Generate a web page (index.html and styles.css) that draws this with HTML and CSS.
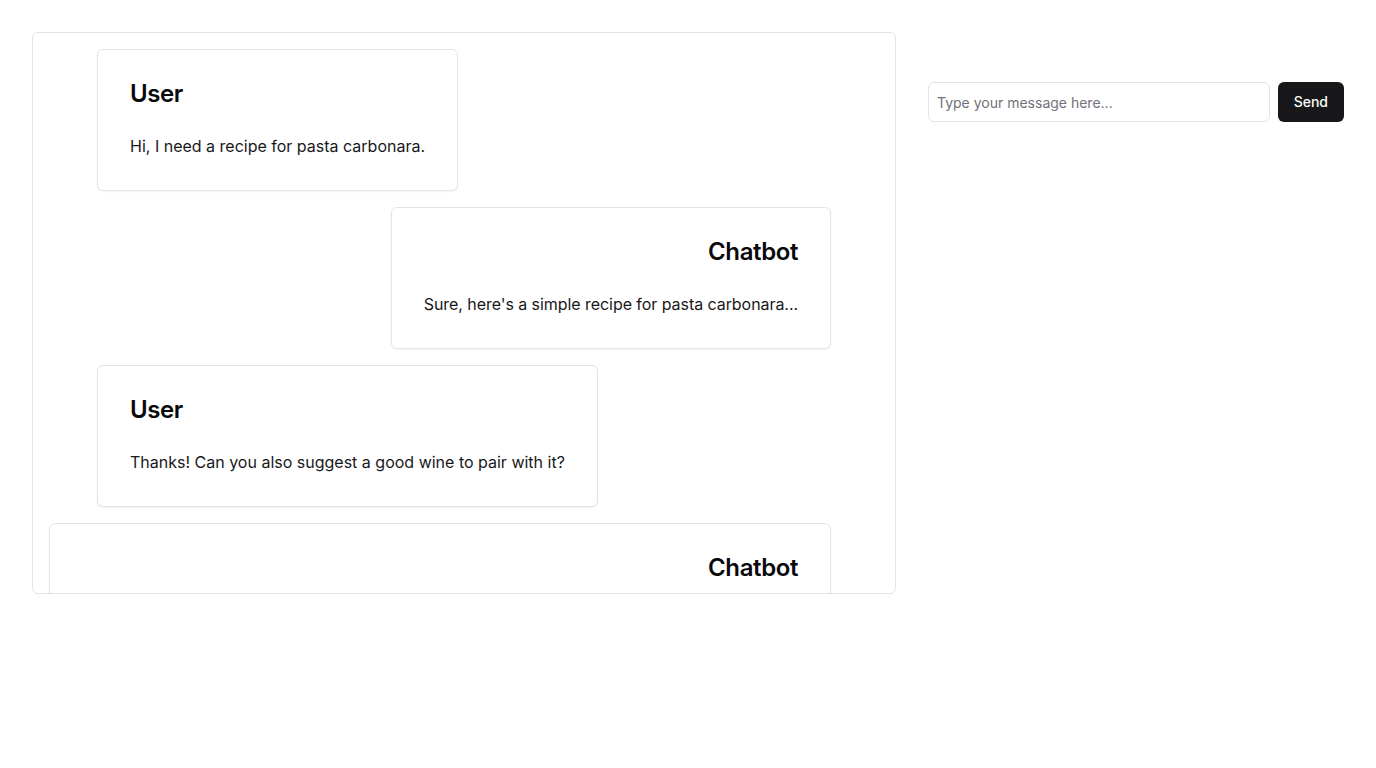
FILE: index.html
```html
<!DOCTYPE html>
<html lang="en">
<head>
<meta charset="utf-8">
<title>Chat</title>
<link rel="stylesheet" href="styles.css">
</head>
<body>
<div class="page">
  <section class="chat">
    <div class="card user">
      <h3 class="title">User</h3>
      <p class="text">Hi, I need a recipe for pasta carbonara.</p>
    </div>
    <div class="card bot">
      <h3 class="title">Chatbot</h3>
      <p class="text tight">Sure, here's a simple recipe for pasta carbonara...</p>
    </div>
    <div class="card user">
      <h3 class="title">User</h3>
      <p class="text">Thanks! Can you also suggest a good wine to pair with it?</p>
    </div>
    <div class="card bot wide">
      <h3 class="title">Chatbot</h3>
      <p class="text">For pasta carbonara, a crisp white wine such as a Pinot Grigio or a Frascati pairs beautifully.</p>
    </div>
  </section>
  <aside class="side">
    <form class="composer">
      <input class="input" type="text" placeholder="Type your message here...">
      <button class="send" type="button">Send</button>
    </form>
  </aside>
</div>
</body>
</html>
```

FILE: styles.css
```css
* { box-sizing: border-box; }
html, body { margin: 0; background: #ffffff; }
body {
  font-family: Inter, "Noto Sans", sans-serif;
  color: #09090b;
}
.page {
  display: grid;
  grid-template-columns: repeat(3, 1fr);
  gap: 32px;
  padding: 32px;
}
.chat {
  grid-column: span 2;
  height: 562px;
  border: 1px solid #e4e4e7;
  border-radius: 6px;
  padding: 16px;
  overflow: hidden;
  display: flex;
  flex-direction: column;
  gap: 16px;
}
.card {
  border: 1px solid #e4e4e7;
  border-radius: 6px;
  background: #fff;
  box-shadow: 0 1px 2px rgba(0,0,0,0.05);
  padding: 32px;
  flex-shrink: 0;
}
.user {
  align-self: flex-start;
  margin-left: 48px;
}
.bot {
  align-self: flex-end;
  margin-right: 48px;
  text-align: right;
}
.bot.wide {
  align-self: stretch;
  margin-left: 0;
}
.title {
  margin: 0 0 28px;
  font-size: 24px;
  line-height: 24px;
  font-weight: 600;
  letter-spacing: -0.4px;
}
.text {
  margin: 0;
  font-size: 16px;
  line-height: 24px;
  color: #18181b;
}
.text.tight {
  letter-spacing: -0.06px;
}
.side {
  padding-top: 50px;
}
.composer {
  display: flex;
  gap: 8px;
  margin: 0;
}
.input {
  flex: 1;
  min-width: 0;
  height: 40px;
  border: 1px solid #e4e4e7;
  border-radius: 6px;
  padding: 0 8px;
  font-family: Inter, "Noto Sans", sans-serif;
  font-size: 14px;
  color: #09090b;
  background: #fff;
  outline: none;
}
.input::placeholder { color: #71717a; }
.send {
  height: 40px;
  padding: 0 16px 1px;
  border: none;
  border-radius: 6px;
  background: #18181b;
  color: #fafafa;
  font-family: Inter, "Noto Sans", sans-serif;
  font-size: 14px;
  font-weight: 500;
  cursor: pointer;
}
```
